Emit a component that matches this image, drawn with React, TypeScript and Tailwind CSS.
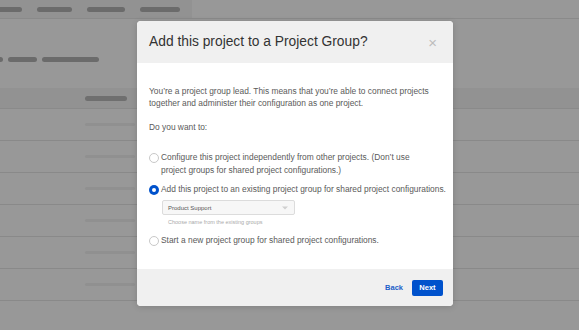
import React from "react";

// Background page rows (faded behind the overlay)
const rows = [0, 1, 2, 3, 4, 5];

const Radio: React.FC<{ checked?: boolean }> = ({ checked }) =>
  checked ? (
    <span className="mt-[1.5px] flex h-[10px] w-[10px] shrink-0 items-center justify-center rounded-full bg-[#0052cc]">
      <span className="h-[4px] w-[4px] rounded-full bg-white" />
    </span>
  ) : (
    <span className="mt-[1.5px] h-[10px] w-[10px] shrink-0 rounded-full border border-[#c8c8c8] bg-white" />
  );

const App: React.FC = () => {
  return (
    <div
      className="relative h-[330px] w-[579px] overflow-hidden bg-[#989898]"
      style={{ fontFamily: '"Liberation Sans", Arial, sans-serif' }}
    >
      {/* Page behind the dialog */}
      <div className="flex h-[19px] border-b border-[#8a8a8a]">
        <div className="flex w-[192px] items-center gap-[15px] bg-[#929292]">
          <span className="h-[5px] w-[22px] rounded-r-full bg-[#6b6b6b]" />
          <span className="h-[5px] w-[35px] rounded-full bg-[#6b6b6b]" />
          <span className="h-[5px] w-[38px] rounded-full bg-[#6b6b6b]" />
          <span className="h-[5px] w-[40px] rounded-full bg-[#6b6b6b]" />
        </div>
        <div className="flex-1" />
      </div>
      <div className="flex h-[69px] items-start gap-[5px] pt-[38px]">
        <span className="h-[5px] w-[3px] rounded-r-full bg-[#6b6b6b]" />
        <span className="h-[5px] w-[29px] rounded-full bg-[#6b6b6b]" />
        <span className="h-[5px] w-[57px] rounded-full bg-[#6b6b6b]" />
      </div>
      <div className="flex h-[21px] items-center border-b border-[#8a8a8a] bg-[#929292] pl-[85px]">
        <span className="h-[5px] w-[42px] rounded-full bg-[#6f6f6f]" />
      </div>
      {rows.map((r) => (
        <div
          key={r}
          className="flex h-[32px] items-center border-b border-[#898989] pl-[85px]"
        >
          <span className="h-[3px] w-[50px] rounded-full bg-[#909090]" />
        </div>
      ))}

      {/* Dialog */}
      <div className="absolute left-[137px] top-[21px] flex w-[316px] flex-col overflow-hidden rounded-[4px] bg-white shadow-[0_1px_6px_rgba(0,0,0,0.15)]">
        <div className="flex h-[42px] items-center justify-between bg-[#f0f0f0] pl-[12px] pr-[16px]">
          <h1 className="text-[13.8px] leading-none text-[#333]">
            Add this project to a Project Group?
          </h1>
          <span className="text-[15px] font-light leading-none text-[#bdbdbd]">
            ×
          </span>
        </div>

        <div className="flex flex-col pb-[22px] pl-[12px] pr-[4px] pt-[22px] text-[8.4px] leading-[12px] text-[#5a5a5a]">
          <p>
            You’re a project group lead. This means that you’re able to connect
            projects together and administer their configuration as one project.
          </p>
          <p className="mt-[12px]">Do you want to:</p>

          <div className="mt-[18px] flex flex-col gap-[6px] leading-[13px]">
            <label className="flex items-start gap-[2px]">
              <Radio />
              <span>
                Configure this project independently from other projects. (Don’t use
                <br />
                project groups for shared project configurations.)
              </span>
            </label>
            <div>
              <label className="flex items-start gap-[2px]">
                <Radio checked />
                <span className="whitespace-nowrap">
                  Add this project to an existing project group for shared project
                  configurations.
                </span>
              </label>
              <div className="ml-[13px] mt-[4px] flex h-[15px] w-[133px] items-center justify-between rounded-[2px] border border-[#dcdcdc] bg-[#f7f7f7] pl-[5px] pr-[6px]">
                <span className="text-[6px] leading-none text-[#555]">
                  Product Support
                </span>
                <svg width="6" height="4" viewBox="0 0 6 4">
                  <path d="M0 0.5 L3 3.5 L6 0.5 Z" fill="#d0d0d0" />
                </svg>
              </div>
              <p className="mb-[2px] ml-[19px] mt-[4px] text-[5.5px] leading-[7px] text-[#aaa]">
                Choose name from the existing groups
              </p>
            </div>
            <label className="flex items-start gap-[2px]">
              <Radio />
              <span>Start a new project group for shared project configurations.</span>
            </label>
          </div>
        </div>

        <div className="flex h-[37px] items-center justify-end gap-[9px] bg-[#f0f0f0] pr-[10px]">
          <span className="text-[7.5px] font-bold text-[#1d5fc9]">Back</span>
          <span className="flex h-[16px] w-[31px] items-center justify-center rounded-[2px] bg-[#0052cc] text-[7.5px] font-bold text-white">
            Next
          </span>
        </div>
      </div>
    </div>
  );
};

export default App;
